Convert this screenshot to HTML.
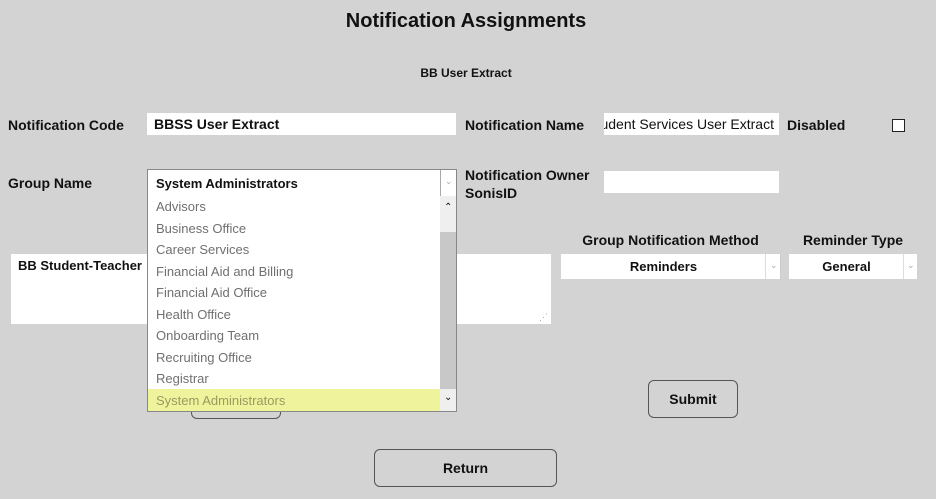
<!DOCTYPE html>
<html><head><style>
body{margin:0;width:936px;height:499px;background:#d3d3d3;font-family:"Liberation Sans",sans-serif;position:relative;overflow:hidden;color:#111}
.a{position:absolute;white-space:nowrap}
.b{font-weight:bold;font-size:14px}
.in{position:absolute;background:#fff;box-sizing:border-box}
.btn{position:absolute;border:1px solid #555;border-radius:6px;box-sizing:border-box;font-weight:bold;font-size:14px;text-align:center;background:#d3d3d3}
.li{position:absolute;left:8px;font-size:13px;color:#707070}
.chev{position:absolute;font-size:9px;color:#aaa}
</style></head><body>
<div class="a" style="left:0;width:932px;text-align:center;top:10px;font-size:20px;font-weight:bold">Notification Assignments</div>
<div class="a" style="left:0;width:932px;text-align:center;top:66px;font-size:12px;font-weight:bold">BB User Extract</div>

<div class="a b" style="left:8px;top:117px">Notification Code</div>
<div class="in" style="left:147px;top:113px;width:309px;height:22px"><span class="a" style="left:7px;top:3px;font-size:14px;font-weight:600">BBSS User Extract</span></div>
<div class="a b" style="left:465px;top:117px">Notification Name</div>
<div class="in" style="left:604px;top:113px;width:175px;height:22px;overflow:hidden"><span class="a" style="right:5px;top:3px;font-size:14px">Student Services User Extract</span></div>
<div class="a b" style="left:787px;top:117px">Disabled</div>
<div class="a" style="left:892px;top:119px;width:11px;height:11px;border:1px solid #222;background:#fff"></div>

<div class="a b" style="left:8px;top:175px">Group Name</div>
<div class="a b" style="left:465px;top:166px;line-height:18px">Notification Owner<br>SonisID</div>
<div class="in" style="left:604px;top:171px;width:175px;height:22px"></div>

<div class="a b" style="left:561px;top:232px;width:219px;text-align:center">Group Notification Method</div>
<div class="a b" style="left:789px;top:232px;width:128px;text-align:center">Reminder Type</div>
<div class="in" style="left:11px;top:254px;width:540px;height:70px"><span class="a" style="left:7px;top:4px;font-size:13px;font-weight:bold">BB Student-Teacher</span><span class="chev" style="right:3px;bottom:1px">⋰</span></div>
<div class="in" style="left:561px;top:254px;width:220px;height:25px;border-right:1px solid #ccc"><span class="a b" style="left:0;width:205px;text-align:center;top:5px;font-size:13px">Reminders</span><div class="a" style="left:204px;top:0;height:25px;border-left:1px solid #ddd;width:15px"><span class="chev" style="left:4px;top:6px">⌄</span></div></div>
<div class="in" style="left:789px;top:254px;width:128px;height:25px"><span class="a b" style="left:0;width:115px;text-align:center;top:5px;font-size:13px">General</span><div class="a" style="left:114px;top:0;height:25px;border-left:1px solid #ddd;width:13px"><span class="chev" style="left:3px;top:6px">⌄</span></div></div>

<div class="btn" style="left:191px;top:392px;width:90px;height:27px"></div>
<div class="btn" style="left:648px;top:380px;width:90px;height:38px;line-height:36px">Submit</div>
<div class="btn" style="left:374px;top:449px;width:183px;height:38px;line-height:36px">Return</div>

<div class="in" style="left:147px;top:169px;width:310px;height:28px;border:1px solid #888"><span class="a" style="left:8px;top:6px;font-size:13px;font-weight:bold">System Administrators</span><div class="a" style="right:0;top:0;width:15px;height:26px;border-left:1px solid #aaa"><span class="chev" style="left:4px;top:6px">⌄</span></div></div>
<div class="in" style="left:147px;top:196px;width:310px;height:216px;border:1px solid #888;border-top:none">
<div class="li" style="top:3px">Advisors</div>
<div class="li" style="top:25px">Business Office</div>
<div class="li" style="top:46px">Career Services</div>
<div class="li" style="top:68px">Financial Aid and Billing</div>
<div class="li" style="top:89px">Financial Aid Office</div>
<div class="li" style="top:111px">Health Office</div>
<div class="li" style="top:132px">Onboarding Team</div>
<div class="li" style="top:154px">Recruiting Office</div>
<div class="li" style="top:175px">Registrar</div>
<div class="a" style="left:0;top:193px;width:292px;height:22px;background:#eef39c"></div>
<div class="li" style="top:197px;color:#9a9a60">System Administrators</div>
<div class="a" style="left:292px;top:0;width:16px;height:215px;background:#c8c8c8"></div>
<div class="a" style="left:292px;top:0;width:16px;height:36px;background:#efefef"></div>
<div class="a" style="left:292px;top:193px;width:16px;height:22px;background:#efefef"></div>
<span class="a" style="left:296px;top:6px;font-size:10px">⌃</span>
<span class="a" style="left:296px;top:196px;font-size:10px">⌄</span>
</div>
</body></html>
